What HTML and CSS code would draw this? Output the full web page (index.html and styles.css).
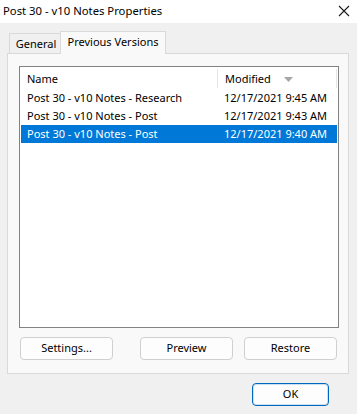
FILE: index.html
```html
<!DOCTYPE html>
<html lang="en">
<head>
    <meta charset="UTF-8">
    <title>Post 30 - v10 Notes Properties</title>
    <link rel="stylesheet" href="styles.css">
</head>
<body>
    <div class="window">
        <div class="titlebar">
            <span class="title">Post 30 - v10 Notes Properties</span>
            <svg class="close" width="12" height="12" viewBox="0 0 12 12">
                <path d="M1 1 L11 11 M11 1 L1 11" stroke="#1a1a1a" stroke-width="1.1" fill="none"/>
            </svg>
        </div>
        <div class="tabs">
            <div class="tab">General</div>
            <div class="tab active">Previous Versions</div>
        </div>
        <div class="panel">
            <div class="list">
                <div class="row header">
                    <div class="col name">Name</div>
                    <div class="col modified">Modified
                        <svg class="sort" width="9" height="5" viewBox="0 0 9 5"><path d="M0 0 L9 0 L4.5 5 Z" fill="#a6a6a6"/></svg>
                    </div>
                    <div class="col rest"></div>
                </div>
                <div class="row">
                    <div class="col name">Post 30 - v10 Notes - Research</div>
                    <div class="col modified">12/17/2021 9:45 AM</div>
                </div>
                <div class="row">
                    <div class="col name">Post 30 - v10 Notes - Post</div>
                    <div class="col modified">12/17/2021 9:43 AM</div>
                </div>
                <div class="row selected">
                    <div class="col name">Post 30 - v10 Notes - Post</div>
                    <div class="col modified">12/17/2021 9:40 AM</div>
                </div>
            </div>
            <div class="actions">
                <button class="btn">Settings...</button>
                <div class="right-btns">
                    <button class="btn">Preview</button>
                    <button class="btn">Restore</button>
                </div>
            </div>
        </div>
        <div class="footer">
            <button class="btn ok">OK</button>
        </div>
    </div>
</body>
</html>
```

FILE: styles.css
```css
body {
    margin: 0;
    background-color: #f0f0f0;
    font-family: "Noto Sans", "Open Sans", sans-serif;
    font-size: 11px;
    color: #000;
}
.window {
    width: 357px;
    height: 414px;
    overflow: hidden;
}
.titlebar {
    height: 23px;
    background-color: #fff;
    display: flex;
    align-items: center;
    justify-content: space-between;
    padding: 0 7px 0 3px;
    font-size: 11.3px;
}
.title {
    margin-top: -2px;
}
.close {
    margin-top: -1px;
}
.tabs {
    display: flex;
    align-items: flex-end;
    margin: 8px 0 0 9px;
    height: 22px;
    position: relative;
    z-index: 1;
}
.tab {
    height: 20px;
    line-height: 19px;
    width: 51px;
    text-align: center;
    padding-left: 2px;
    border: 1px solid #d9d9d9;
    border-bottom: none;
    border-right: none;
    box-sizing: border-box;
    background-color: #f0f0f0;
}
.tab.active {
    width: 106px;
    height: 23px;
    margin-bottom: -1px;
    padding-left: 0;
    line-height: 20px;
    background-color: #f9f9f9;
    border-right: 1px solid #d9d9d9;
}
.panel {
    margin-left: 7px;
    width: 342px;
    height: 321px;
    box-sizing: border-box;
    border: 1px solid #d9d9d9;
    background-color: #f9f9f9;
    padding: 12px 9px 0 11px;
}
.list {
    height: 262px;
    box-sizing: border-box;
    border: 1px solid #828282;
    background-color: #fff;
    padding: 1px;
}
.row {
    display: flex;
    height: 18px;
    line-height: 17px;
}
.row.header {
    height: 21px;
    line-height: 21px;
}
.col {
    box-sizing: border-box;
    white-space: nowrap;
}
.col.name {
    width: 196px;
    padding-left: 6px;
}
.col.modified {
    width: 120px;
    padding-left: 7px;
}
.header .col.modified {
    border-left: 1px solid #e5e5e5;
    border-right: 1px solid #e5e5e5;
    height: 19px;
    margin-top: 1px;
    line-height: 19px;
}
.sort {
    margin-left: 10px;
    vertical-align: 1px;
}
.row.selected {
    background-color: #0078d7;
    color: #fff;
}
.actions {
    display: flex;
    justify-content: space-between;
    margin-top: 9px;
    padding: 0 2px 0 1px;
}
.right-btns {
    display: flex;
    gap: 11px;
}
.btn {
    width: 93px;
    height: 23px;
    box-sizing: border-box;
    font-family: "Noto Sans", "Open Sans", sans-serif;
    font-size: 11px;
    color: #000;
    background-color: #fdfdfd;
    border: 1px solid #d0d0d0;
    border-radius: 4px;
    padding: 0 0 2px;
}
.footer {
    display: flex;
    justify-content: flex-end;
    padding: 9px 28px 0 0;
}
.btn.ok {
    width: 77px;
    border: 1px solid #0067c0;
    box-shadow: inset 0 0 0 1px #cce0f3;
}
```
